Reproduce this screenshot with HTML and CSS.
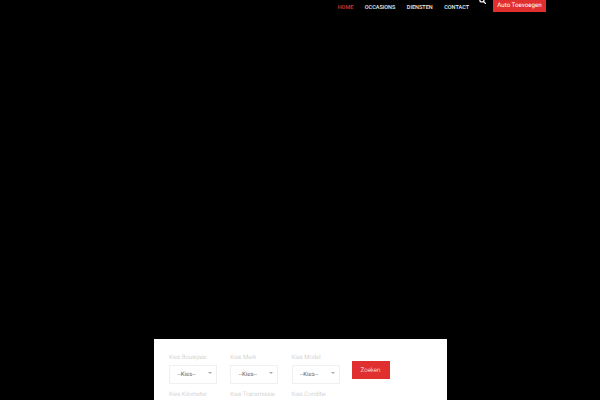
FILE: index.html
```html
<!DOCTYPE html>
<html lang="nl">
<head>
<meta charset="utf-8">
<title>Auto</title>
<link rel="stylesheet" href="styles.css">
</head>
<body>
<header class="top">
  <nav class="nav">
    <a class="nav-link active" href="#">HOME</a>
    <a class="nav-link" href="#">OCCASIONS</a>
    <a class="nav-link" href="#">DIENSTEN</a>
    <a class="nav-link" href="#">CONTACT</a>
  </nav>
  <svg class="search" viewBox="0 0 12 12" width="7" height="7" aria-hidden="true"><circle cx="5" cy="5" r="3.6" fill="none" stroke="#fff" stroke-width="2"/><path d="M7.6 7.6 11 11" stroke="#fff" stroke-width="2.2" stroke-linecap="round"/></svg>
  <a class="add" href="#">Auto Toevoegen</a>
</header>
<main class="hero">
  <form class="panel">
    <div class="fields">
      <div class="field"><span class="label">Kies Bouwjaar:</span><div class="select">--Kies--</div></div>
      <div class="field"><span class="label">Kies Merk</span><div class="select">--Kies--</div></div>
      <div class="field"><span class="label">Kies Model</span><div class="select">--Kies--</div></div>
      <div class="field"><span class="label">Kies Kilometer</span></div>
      <div class="field"><span class="label">Kies Transmissie</span></div>
      <div class="field"><span class="label">Kies Conditie</span></div>
    </div>
    <button class="go" type="button">Zoeken</button>
  </form>
</main>
</body>
</html>
```
FILE: styles.css
```css
* { box-sizing: border-box; }
html, body { margin: 0; height: 400px; overflow: hidden; background: #000; }
body { font-family: Roboto, "Liberation Sans", sans-serif; text-rendering: geometricPrecision; }
.top { display: flex; align-items: flex-start; justify-content: flex-end; height: 339px; padding-right: 54px; }
.nav { display: flex; gap: 11.5px; padding-top: 4px; margin-right: 10px; }
.nav-link { color: #eee; font-size: 5.5px; font-weight: 500; line-height: 8px; text-decoration: none; }
.nav-link.active { color: #d93636; }
.search { margin-top: -3.5px; margin-right: 7px; flex: none; }
.add { background: #e02f2f; color: #fff; font-size: 6.2px; line-height: 11px; height: 12px; width: 53px; text-align: center; text-decoration: none; white-space: nowrap; }
.hero { padding-left: 154px; }
.panel { width: 293px; height: 61px; background: #fff; padding: 15px 15px 0; display: flex; align-items: flex-start; gap: 13px; }
.fields { display: grid; grid-template-columns: repeat(3, 48px); column-gap: 13.25px; row-gap: 7px; }
.field { display: flex; flex-direction: column; gap: 3px; }
.label { color: #bdbdbd; font-size: 6px; font-weight: 300; line-height: 8px; white-space: nowrap; }
.select { position: relative; height: 19px; border: 1px solid #f0f0f0; color: #666; font-size: 6px; line-height: 18px; padding-left: 7.5px; background: #fff; }
.select::after { content: ""; position: absolute; right: 4px; top: 6px; border-left: 2px solid transparent; border-right: 2px solid transparent; border-top: 2.5px solid #aaa; }
.go { width: 38px; height: 18px; margin-top: 7px; margin-left: -1px; border: 0; padding: 0; background: #e02f2f; color: #fff; font: 300 6.2px Roboto, "Liberation Sans", sans-serif; text-rendering: geometricPrecision; }
```
